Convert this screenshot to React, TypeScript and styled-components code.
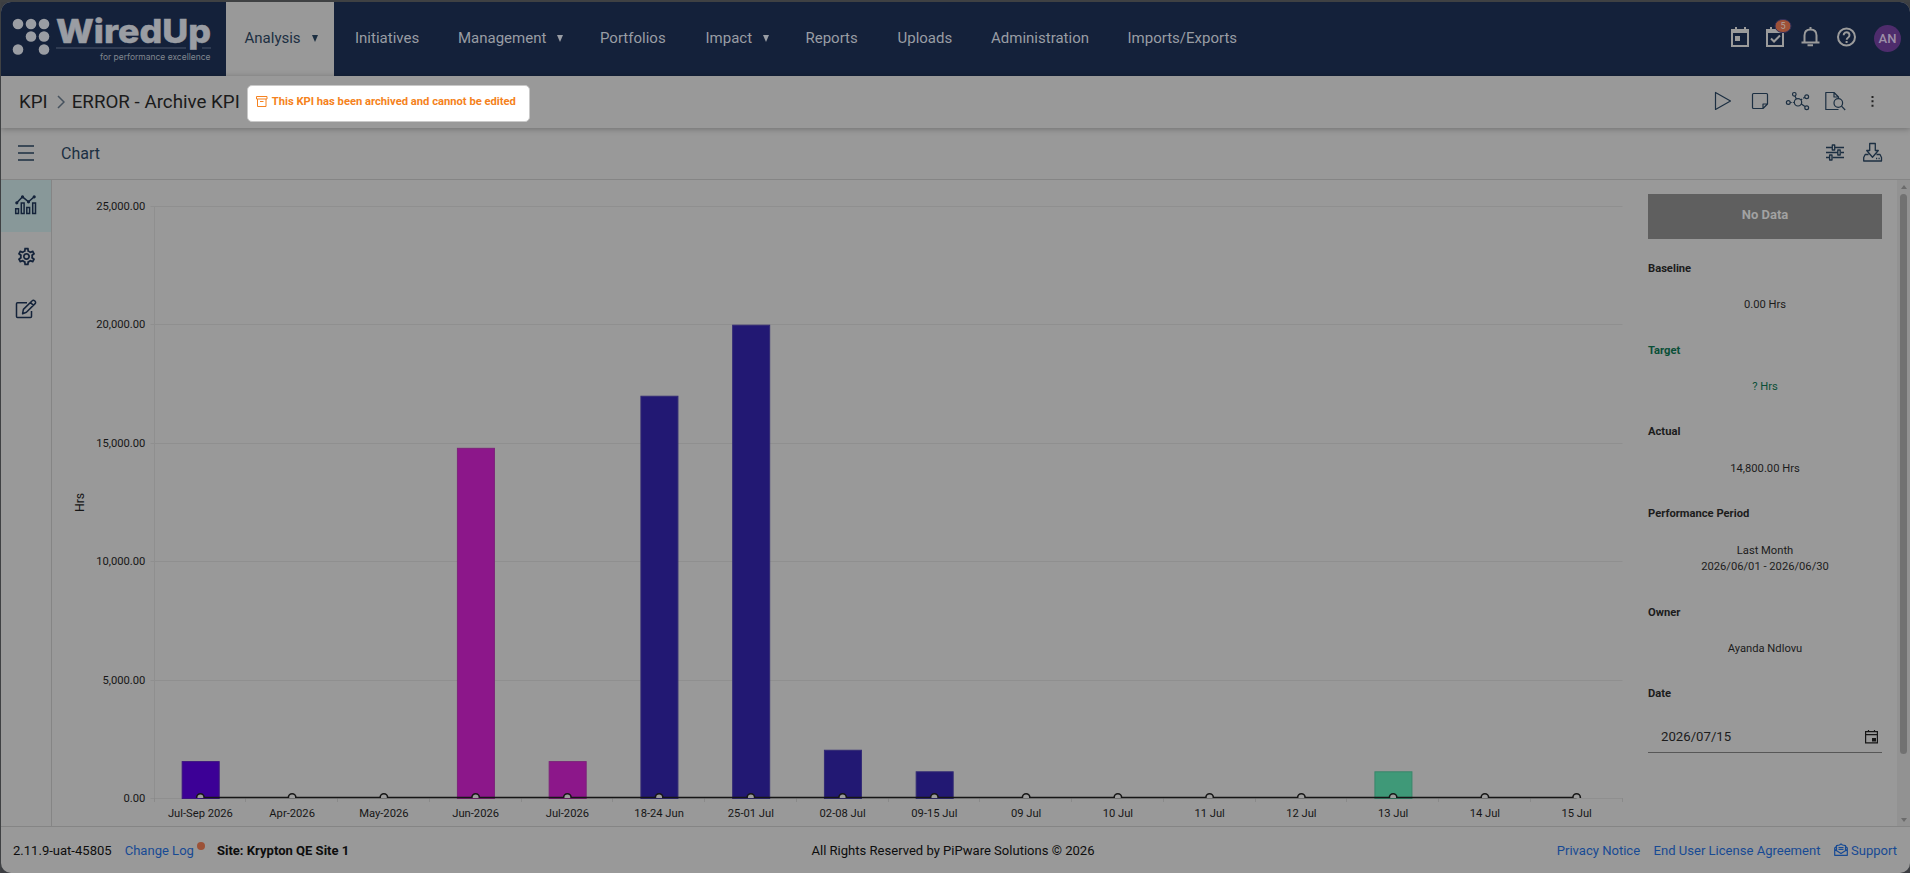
import React from 'react';
import styled, { createGlobalStyle } from 'styled-components';
import { MdOutlineSettings } from 'react-icons/md';

const Global = createGlobalStyle`
  * { box-sizing: border-box; }
  body { margin: 0; background: #3c3e42; font-family: Roboto, "Liberation Sans", sans-serif; overflow: hidden; }
`;

const navy = '#14213a';
const ink = '#1c2f42';
const grey = '#999999';
const line = '#858585';

const Window = styled.div`
  display: flex; flex-direction: column;
  width: 1910px; height: 873px;
  border-top: 2px solid #3f4143; border-left: 1px solid #3f4143;
`;
const Shell = styled.div`
  flex: 1; min-height: 0; display: flex; flex-direction: column;
  background: ${grey}; border-radius: 10px; overflow: hidden;
`;
const Header = styled.header`
  flex: none; height: 74px; background: ${navy}; display: flex; align-items: stretch;
`;
const Brand = styled.div`
  width: 225px;
  svg { display: block; }
`;
const Nav = styled.nav`display: flex; flex: 1;`;
const NavItem = styled.a<{ $w: number; $active?: boolean }>`
  width: ${p => p.$w}px; padding: 0 0 3px ${p => (p.$active ? 18.5 : 21)}px;
  display: flex; align-items: center; font-size: 15px; white-space: nowrap;
  color: ${p => (p.$active ? ink : '#999da4')};
  background: ${p => (p.$active ? grey : 'transparent')};
`;
const Caret = styled.i`
  margin-left: 11px; margin-top: 2px;
  border: 3.5px solid transparent; border-top: 7px solid currentColor; border-bottom: 0;
`;
const HeaderIcons = styled.div`
  display: flex; padding-right: 9px; color: #9b9b9b;
  svg { display: block; }
`;
const Avatar = styled.div`
  width: 27px; height: 27px; margin: 23px 0 0 14px; border-radius: 50%;
  background: #4e2c6c; color: #9d8fa8; font-size: 13px; font-weight: 500;
  display: flex; align-items: center; justify-content: center;
`;
const TitleBar = styled.div`
  flex: none; height: 52px; display: flex; align-items: center; padding: 0 28px 0 18px;
  font-size: 18.75px; color: #1b1b1b; box-shadow: 0 1px 6px rgba(0,0,0,.28); z-index: 1;
  svg { display: block; flex: none; }
`;
const Crumb = styled.span`white-space: nowrap; padding-bottom: 1px;`;
const CrumbChevron = styled.svg`margin: 0 7px 1px 9px;`;
const Notice = styled.div`
  height: 37px; width: 283px; margin: 2px 0 0 7px; border-radius: 5px; background: #fff;
  border: 1px solid #c9c9c9; color: #f58220; font-size: 11.2px; font-weight: 700;
  display: flex; align-items: center; padding: 0 0 4px 8px; gap: 4px; white-space: nowrap;
`;
const Spacer = styled.div`flex: 1;`;
const ToolBar = styled.div`
  flex: none; height: 52px; display: flex; align-items: center; padding: 0 27px 0 16px;
  border-bottom: 1px solid ${line}; color: ${ink}; font-size: 16px;
  svg { display: block; }
`;
const MenuButton = styled.div`padding-bottom: 2px;`;
const ToolTitle = styled.span`margin-left: 27px;`;
const Body = styled.main`flex: 1; min-height: 0; display: flex;`;
const Side = styled.aside`width: 51px; border-right: 1px solid ${line}; color: #14233a;`;
const SideItem = styled.div<{ $on?: boolean }>`
  height: 52px; display: flex; align-items: center; justify-content: center;
  padding-bottom: 3px; background: ${p => (p.$on ? '#889899' : 'transparent')};
`;
const ChartArea = styled.section`
  flex: 1; min-width: 0;
  svg { display: block; font-family: Roboto, sans-serif; }
`;
const Panel = styled.section`
  width: 249px; padding: 14px 15px 0 0; font-size: 11.2px; color: #1c1c1c;
`;
const Status = styled.div`
  height: 45px; margin-bottom: 22px; background: #5f5f5f; color: #a2a2a2; font-weight: 700; font-size: 13px;
  display: flex; align-items: center; justify-content: center; padding-bottom: 4px;
`;
const Field = styled.div<{ $h: number; $green?: boolean }>`
  height: ${p => p.$h}px; color: ${p => (p.$green ? '#0a4f37' : '#1c1c1c')};
  text-align: center; line-height: 16px;
`;
const Label = styled.div<{ $gap?: number }>`
  font-weight: 700; text-align: left; line-height: 16px; margin-bottom: ${p => p.$gap ?? 20}px;
`;
const DateInput = styled.div`
  height: 33px; margin-top: -2px; border-bottom: 1px solid #575757;
  display: flex; justify-content: space-between; align-items: center; padding: 0 4px 0 13px;
  font-size: 13.2px;
`;
const Scroll = styled.div`
  width: 13px; background: #929292; display: flex; flex-direction: column; align-items: center;
  padding: 5px 0 4px;
`;
const Arrow = styled.i<{ $down?: boolean }>`
  border: 3.5px solid transparent;
  ${p => (p.$down ? 'border-top: 4px solid #6b6b6b; border-bottom: 0;' : 'border-bottom: 4px solid #6b6b6b; border-top: 0;')}
`;
const Thumb = styled.div`width: 7px; height: 560px; margin: 5px 0 auto; border-radius: 4px; background: #717171;`;
const Footer = styled.footer`
  flex: none; height: 47px; border-top: 1px solid ${line}; display: grid;
  grid-template-columns: 1fr auto 1fr; align-items: center;
  padding: 0 13px 0 12px; font-size: 13.05px; color: #0d0d0d;
`;
const FootGroup = styled.div<{ $end?: boolean }>`
  display: flex; align-items: center; gap: ${p => (p.$end ? 13.5 : 13)}px;
  justify-content: ${p => (p.$end ? 'flex-end' : 'flex-start')};
`;
const Copyright = styled.span`margin-right: 4px;`;
const Link = styled.a`color: #174a94; display: flex; align-items: center; gap: 3px;`;
const Dot = styled.i`width: 8px; height: 8px; border-radius: 50%; background: #9c5238; margin: -9px -1px 0 0;`;

type Bar = { l: string; v: number; c?: string; s?: string };
const bars: Bar[] = [
  { l: 'Jul-Sep 2026', v: 1570, c: '#3c0096', s: '#3b137f' },
  { l: 'Apr-2026', v: 0 }, { l: 'May-2026', v: 0 },
  { l: 'Jun-2026', v: 14800, c: '#8c178a', s: '#7c2379' },
  { l: 'Jul-2026', v: 1570, c: '#8c178a', s: '#7c2379' },
  { l: '18-24 Jun', v: 17000, c: '#221873', s: '#322a74' },
  { l: '25-01 Jul', v: 20000, c: '#221873', s: '#322a74' },
  { l: '02-08 Jul', v: 2050, c: '#221873', s: '#322a74' },
  { l: '09-15 Jul', v: 1140, c: '#221873', s: '#322a74' },
  { l: '09 Jul', v: 0 }, { l: '10 Jul', v: 0 }, { l: '11 Jul', v: 0 }, { l: '12 Jul', v: 0 },
  { l: '13 Jul', v: 1140, c: '#3f9978', s: '#38866a' },
  { l: '14 Jul', v: 0 }, { l: '15 Jul', v: 0 },
];

const X0 = 102.5, STEP = 91.75, Y0 = 618.5, UNIT = 118.4 / 5000;

const Chart = () => (
  <svg width="1596" height="646" viewBox="0 0 1596 646">
    {[0, 5000, 10000, 15000, 20000, 25000].map(v => {
      const y = Math.floor(Y0 - v * UNIT) + 0.5;
      return (
        <g key={v}>
          <path d={`M${X0 - 4} ${y}H${X0 + STEP * 16}`} stroke="#8f8f8f" />
          <text x={93.3} y={y + 3.8} fontSize="11.2" textAnchor="end" fill="#161616">
            {v.toLocaleString('en-US', { minimumFractionDigits: 2 })}
          </text>
        </g>
      );
    })}
    <path d={`M${X0} 26V618`} stroke="#8f8f8f" />
    {Array.from({ length: 17 }, (_, i) => (
      <path key={i} d={`M${Math.round(X0 + STEP * i) - 0.5} 618v4`} stroke="#8a8a8a" />
    ))}
    {bars.map((b, i) => b.v > 0 && (
      <rect key={i} x={X0 + STEP * (i + 0.5) - 18.2} y={Y0 - b.v * UNIT + 0.3} width="37" height={b.v * UNIT - 0.3}
        fill={b.c} stroke={b.s} />
    ))}
    <path d={`M${X0 + STEP / 2} 617.500H${X0 + STEP * 15.5}`} stroke="#161616" strokeWidth="1.300" />
    {bars.map((b, i) => (
      <path key={b.l} d={`M${X0 + STEP * (i + 0.5) - 3.7} 618v-.8a3.700 3.500 0 0 1 7.400 0v.8`} fill="#9c9c9c" stroke="#161616" strokeWidth="1.600" />
    ))}
    {bars.map((b, i) => (
      <text key={b.l} x={X0 + STEP * (i + 0.5)} y="637" fontSize="11.200" textAnchor="middle" fill="#161616">{b.l}</text>
    ))}
    <text transform="translate(32 322.500) rotate(-90)" fontSize="12.200" textAnchor="middle" fill="#161616">Hrs</text>
  </svg>
);

const Logo = () => (
  <svg width="225" height="74" viewBox="1 2 225 74" fill="#9a9da3">
    {[[18, 24], [31, 24], [44, 24], [31, 36.5], [44, 36.5], [18, 49.5], [44, 49.5]].map(([x, y]) => (
      <circle key={`${x}-${y}`} cx={x} cy={y} r="5.300" />
    ))}
    <text x="56" y="42.700" fontFamily="Inter, sans-serif" fontWeight="800" fontSize="33" textLength="155" lengthAdjust="spacingAndGlyphs" stroke="#9a9da3" strokeWidth=".5">WiredUp</text>
    <path d="M56 48H186M202 48H211" stroke="#4b566a" />
    <text x="100" y="60.200" fontSize="8.500" fontFamily="Inter, sans-serif" textLength="110.500" lengthAdjust="spacingAndGlyphs" fill="#80868f">for performance excellence</text>
  </svg>
);

const TopIcons = () => (
  <svg width="136" height="74" viewBox="1724 2 136 74" fill="none" stroke="#9b9b9b" strokeWidth="2">
    <path d="M1732 30h16v16h-16zM1732 32h16M1736 27v4M1745 27v4" />
    <path d="M1735 36h5v5h-5z" fill="#9b9b9b" stroke="none" />
    <path d="M1767 30h16v16h-16zM1767 32h16M1771 27v4M1780 27v4M1771 38.500l3 3 6-6" />
    <ellipse cx="1783" cy="26" rx="8" ry="6.600" fill="#9e5138" stroke="#33305a" strokeWidth="1" />
    <text x="1783" y="29.200" fontSize="9" textAnchor="middle" fill="#b0a29c" stroke="none">5</text>
    <path d="M1801.500 42.500h18M1804.500 42v-6.500c0-4 2.500-6 6-6s6 2 6 6V42M1810.500 27v2.500M1807.500 45.200h5.500" />
    <circle cx="1846.500" cy="37" r="8.500" />
    <path d="M1843.700 35.200a2.900 2.900 0 1 1 4.500 2.300c-1.100.7-1.500 1.200-1.500 2.300M1846.600 41v2" />
  </svg>
);

const PageIcons = () => (
  <svg width="170" height="50" viewBox="1712 76 170 50" fill="none" stroke={ink} strokeWidth="1.200" strokeLinejoin="round">
    <path d="M1715.500 91.500v17l15-8.500z" />
    <path d="M1753.500 92.500h13a1 1 0 0 1 1 1v9.500l-4.500 4.500h-9.500a1 1 0 0 1-1-1v-13a1 1 0 0 1 1-1zM1763 107.500v-4.500h4.500" />
    <circle cx="1798" cy="101.300" r="3.700" />
    <circle cx="1788.300" cy="101.500" r="1.900" />
    <circle cx="1794.300" cy="93.300" r="1.800" />
    <circle cx="1806.700" cy="95.700" r="1.900" />
    <circle cx="1806.700" cy="106.800" r="1.900" />
    <path d="M1790.200 101.500h1.500M1792.800 101.500h1M1795 95l1.400 2.900M1801 98.800l1.200-.9M1803.200 97.200l1.600-.9M1801.300 103l3.700 2.600" />
    <path d="M1838.500 108.500h-12.700v-17h8.200l4.500 4.500v2M1834 91.700v4.300h4.500" />
    <circle cx="1838.300" cy="102" r="4.300" />
    <path d="M1841.500 105.200l3.700 3.800" />
    <path d="M1871.500 95h2v2h-2zM1871.500 99.300h2v2h-2zM1871.500 103.700h2v2h-2z" fill="#222" stroke="none" />
  </svg>
);

const Hamburger = () => (
  <svg width="17" height="16" viewBox="0 0 17 16" stroke={ink} strokeWidth="1.700"><path d="M1 1h16M1 8h16M1 15h16" /></svg>
);

const ToolIcons = () => (
  <svg width="61" height="51" viewBox="1822 128 61 51" fill="none" stroke={ink} strokeWidth="1.300" strokeLinejoin="round">
    <path d="M1826 147.500h6M1835 147.500h9M1826 152.500h12M1841 152.500h3M1826 157.500h3.500M1832.500 157.500h11.500" />
    <path d="M1832.300 145h2.400v5h-2.400zM1837.800 150h2.400v5h-2.400zM1829.600 155h2.400v5h-2.400z" />
    <path d="M1869.700 143.500h5.600v7h3l-5.800 6.700-5.800-6.700h3zM1868.500 154.500h-3.300l-1.500 3v3.500h17.800v-3.500l-1.500-3h-3.500" />
    <path d="M1876 158.500h1.200M1878.500 158.500h1.200" />
  </svg>
);

const ChartIcon = () => (
  <svg width="24" height="20" viewBox="14.500 194.500 24 20" fill="none" stroke="currentColor" strokeWidth="1.500">
    <path d="M16.200 208.200h2.800v4.800h-2.800zM21.800 202.500h2.800V213h-2.800zM27.300 207h2.800v6h-2.800zM33.200 202.500H36V213h-2.800z" />
    <path d="M17.300 202.300l5.700-6 6 5 5.700-5" />
    <path d="M17.300 202.300h.01M23 196.300h.01M29 201.300h.01M34.700 196.300h.01" strokeWidth="3.200" strokeLinecap="round" />
  </svg>
);

const EditIcon = () => (
  <svg width="22" height="20" viewBox="15 298 22 20" fill="none" stroke="currentColor" strokeWidth="1.500" strokeLinejoin="round">
    <path d="M27 301.800H17.500a1 1 0 0 0-1 1v12.700a1 1 0 0 0 1 1h13a1 1 0 0 0 1-1V310" />
    <path d="M22.600 312.700l.8-4.300 8.800-8.700a1.600 1.600 0 0 1 2.300 0l.6.600a1.600 1.600 0 0 1 0 2.300l-8.700 8.700zM30.500 301.500l2.900 2.900" />
  </svg>
);

const ArchiveIcon = () => (
  <svg width="12" height="11" viewBox="0 0 12 11" fill="none" stroke="#f58220">
    <path d="M.5.5h10.500v2.500H.5zM1.500 3v7.500h8.500V3M4 5.500h3.500" />
  </svg>
);

const CalendarIcon = () => (
  <svg width="13" height="15" viewBox="0 0 13 15" fill="none" stroke="#161616" strokeWidth="1.200">
    <path d="M.6 2.600h11.800v11.200H.6zM.6 5.600h11.800M3.500 1v2M9.500 1v2" />
    <path d="M7 9h4v3.500H7z" fill="#161616" stroke="none" />
  </svg>
);

const MailIcon = () => (
  <svg width="14" height="14" viewBox="0 0 14 14" fill="none" stroke="currentColor" strokeWidth="1.200" strokeLinejoin="round">
    <path d="M2.500 3.500L.7 5v7.300h12.600V5l-1.800-1.500M.7 6.500L7 10.500l6.300-4M2.500 7.500V2.700L5.500 2 7 .9 8.500 2l3 .7v4.800M4.500 4.700h5M4.500 6.500h5" />
  </svg>
);

export default function App() {
  return (
    <>
      <Global />
      <Window>
        <Shell>
          <Header>
            <Brand><Logo /></Brand>
            <Nav>
              <NavItem $w={108} $active>Analysis<Caret /></NavItem>
              <NavItem $w={103}>Initiatives</NavItem>
              <NavItem $w={142}>Management<Caret /></NavItem>
              <NavItem $w={105.5}>Portfolios</NavItem>
              <NavItem $w={100}>Impact<Caret /></NavItem>
              <NavItem $w={92}>Reports</NavItem>
              <NavItem $w={93.5}>Uploads</NavItem>
              <NavItem $w={136.5}>Administration</NavItem>
              <NavItem $w={150}>Imports/Exports</NavItem>
            </Nav>
            <HeaderIcons><TopIcons /><Avatar>AN</Avatar></HeaderIcons>
          </Header>
          <TitleBar>
            <Crumb>KPI</Crumb>
            <CrumbChevron width="8" height="14" viewBox="0 0 8 14" fill="none" stroke="#46525e" strokeWidth="1.500"><path d="M1 1l6 6-6 6" /></CrumbChevron>
            <Crumb>ERROR - Archive KPI</Crumb>
            <Notice><ArchiveIcon />This KPI has been archived and cannot be edited</Notice>
            <Spacer />
            <PageIcons />
          </TitleBar>
          <ToolBar>
            <MenuButton><Hamburger /></MenuButton>
            <ToolTitle>Chart</ToolTitle>
            <Spacer />
            <ToolIcons />
          </ToolBar>
          <Body>
            <Side>
              <SideItem $on><ChartIcon /></SideItem>
              <SideItem><MdOutlineSettings size={21} /></SideItem>
              <SideItem><EditIcon /></SideItem>
            </Side>
            <ChartArea><Chart /></ChartArea>
            <Panel>
              <Status>No Data</Status>
              <Field $h={82}><Label>Baseline</Label>0.00 Hrs</Field>
              <Field $h={81} $green><Label>Target</Label>? Hrs</Field>
              <Field $h={82}><Label $gap={21}>Actual</Label>14,800.00 Hrs</Field>
              <Field $h={99}><Label $gap={21}>Performance Period</Label>Last Month<br />2026/06/01 - 2026/06/30</Field>
              <Field $h={81}><Label>Owner</Label>Ayanda Ndlovu</Field>
              <Label>Date</Label>
              <DateInput>2026/07/15<CalendarIcon /></DateInput>
            </Panel>
            <Scroll><Arrow /><Thumb /><Arrow $down /></Scroll>
          </Body>
          <Footer>
            <FootGroup>
              <span>2.11.9-uat-45805</span>
              <Link>Change Log<Dot /></Link>
              <b>Site: Krypton QE Site 1</b>
            </FootGroup>
            <Copyright>All Rights Reserved by PiPware Solutions © 2026</Copyright>
            <FootGroup $end>
              <Link>Privacy Notice</Link>
              <Link>End User License Agreement</Link>
              <Link><MailIcon />Support</Link>
            </FootGroup>
          </Footer>
        </Shell>
      </Window>
    </>
  );
}
